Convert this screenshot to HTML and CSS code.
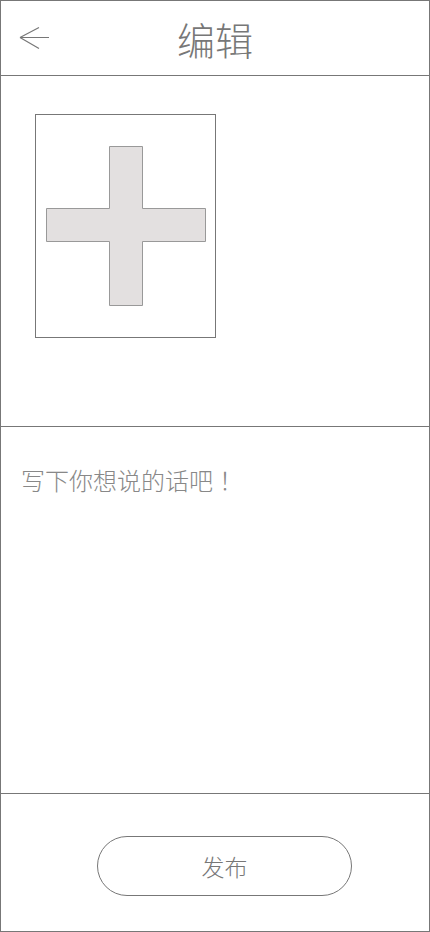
FILE: index.html
```html
<!DOCTYPE html>
<html lang="zh">
<head>
<meta charset="utf-8">
<title>编辑</title>
<link rel="stylesheet" href="styles.css">
</head>
<body>
<div class="page">
  <header class="header">
    <svg class="back" width="40" height="40" viewBox="0 0 40 40">
      <path d="M10 18.5 H39 M10 18.5 L29 8.5 M10 18.5 L29 29.5" fill="none" stroke="#777" stroke-width="1.2"/>
    </svg>
    <h1 class="title">编辑</h1>
  </header>
  <section class="photos">
    <div class="add-box">
      <svg width="179" height="222" viewBox="0 0 179 222">
        <path d="M73.5 31.5 H106.5 V93.5 H169.5 V126.5 H106.5 V190.5 H73.5 V126.5 H10.5 V93.5 H73.5 Z" fill="#e3e0e0" stroke="#999" stroke-width="1"/>
      </svg>
    </div>
  </section>
  <section class="content">
    <p class="placeholder">写下你想说的话吧<span class="bang">！</span></p>
  </section>
  <footer class="footer">
    <button class="publish">发布</button>
  </footer>
</div>
</body>
</html>
```

FILE: styles.css
```css
html, body {
  margin: 0;
  padding: 0;
  background: #fff;
}
.page {
  width: 430px;
  height: 932px;
  box-sizing: border-box;
  border: 1px solid #777;
  display: flex;
  flex-direction: column;
  font-family: "Noto Sans CJK SC", "Noto Sans", sans-serif;
  color: #777;
}
.header {
  height: 74px;
  border-bottom: 1px solid #777;
  position: relative;
  display: flex;
  align-items: center;
  justify-content: center;
  flex: none;
}
.back {
  position: absolute;
  left: 9px;
  top: 18px;
}
.title {
  margin: 0;
  font-size: 38px;
  font-weight: 300;
  line-height: 1;
  color: #777;
  padding-top: 2px;
}
.photos {
  height: 351px;
  border-bottom: 1px solid #777;
  flex: none;
  padding: 38px 0 0 34px;
  box-sizing: border-box;
}
.add-box {
  width: 181px;
  height: 224px;
  box-sizing: border-box;
  border: 1px solid #777;
}
.add-box svg {
  display: block;
}
.content {
  height: 367px;
  border-bottom: 1px solid #777;
  flex: none;
  box-sizing: border-box;
  padding: 36px 0 0 20px;
}
.placeholder {
  margin: 0;
  font-size: 24px;
  line-height: 34px;
  font-weight: 300;
  color: #888;
}
.bang {
  margin-left: 6px;
}
.footer {
  flex: 1;
  padding: 42px 0 0 96px;
  box-sizing: border-box;
}
.publish {
  width: 255px;
  height: 60px;
  box-sizing: border-box;
  border: 1px solid #777;
  border-radius: 30px;
  background: #fff;
  font-family: "Noto Sans CJK SC", "Noto Sans", sans-serif;
  font-size: 23px;
  font-weight: 300;
  color: #777;
  padding: 0;
}
```
